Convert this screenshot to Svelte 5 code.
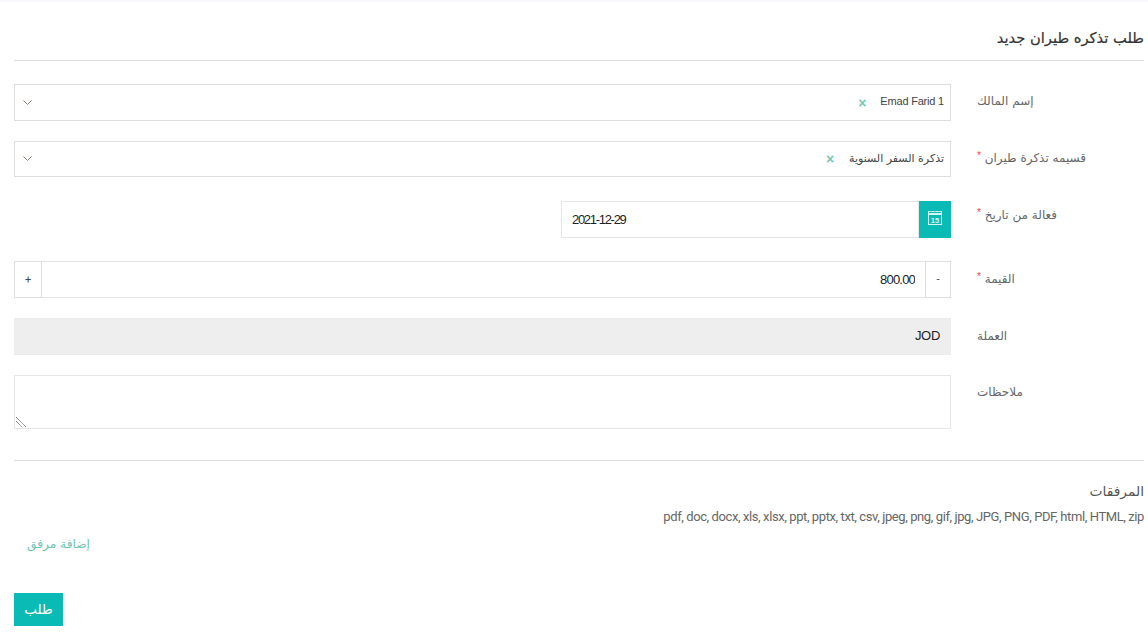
<script>
  const exts = 'pdf, doc, docx, xls, xlsx, ppt, pptx, txt, csv, jpeg, png, gif, jpg, JPG, PNG, PDF, html, HTML, zip';
</script>

<div class="strip"></div>
<main class="page" dir="rtl">
  <h1 class="title">طلب تذكره طيران جديد</h1>

  <div class="row r1">
    <div class="field">
      <div class="select">
        <span class="value" dir="ltr">Emad Farid 1</span>
        <span class="clear">×</span>
        <svg class="chev" width="9" height="6" viewBox="0 0 9 6"><path d="M.5.5l4 4 4-4" fill="none" stroke="#8a7f76" stroke-width="1"/></svg>
      </div>
    </div>
    <label class="label">إسم المالك</label>
  </div>

  <div class="row r2">
    <div class="field">
      <div class="select short">
        <span class="value">تذكرة السفر السنوية</span>
        <span class="clear">×</span>
        <svg class="chev" width="9" height="6" viewBox="0 0 9 6"><path d="M.5.5l4 4 4-4" fill="none" stroke="#8a7f76" stroke-width="1"/></svg>
      </div>
    </div>
    <label class="label">قسيمه تذكرة طيران <i>*</i></label>
  </div>

  <div class="row r3">
    <div class="field">
      <div class="date">
        <button class="cal" aria-label="calendar">
          <svg width="14" height="14" viewBox="0 0 14 14" fill="none" stroke="#d4f3f1">
            <rect x=".5" y=".5" width="13" height="13"/>
            <path d="M.5 3h13" stroke-width="2"/>
            <path d="M3 .5v1M7 .5v1M11 .5v1" stroke="#0abbb5"/>
            <text x="7" y="11.500" fill="#d4f3f1" stroke="none" font-size="7.500" font-weight="700" text-anchor="middle" font-family="Liberation Sans, sans-serif">15</text>
          </svg>
        </button>
        <input class="input date-input" dir="ltr" value="2021-12-29" />
      </div>
    </div>
    <label class="label">فعالة من تاريخ <i>*</i></label>
  </div>

  <div class="row r4">
    <div class="field">
      <div class="stepper">
        <span class="step">-</span>
        <input class="input amount" dir="rtl" value="800.00" />
        <span class="step plus">+</span>
      </div>
    </div>
    <label class="label">القيمة <i>*</i></label>
  </div>

  <div class="row r5">
    <div class="field">
      <input class="input currency" disabled dir="rtl" value="JOD" />
    </div>
    <label class="label">العملة</label>
  </div>

  <div class="row r6">
    <div class="field notes-wrap">
      <textarea class="notes" dir="rtl"></textarea>
      <svg class="grip" width="12" height="12" viewBox="0 0 12 12" aria-hidden="true">
        <path d="M1 1l10 10M1 5l6 6" fill="none" stroke="#555" stroke-width="1" stroke-dasharray="1 .6"/>
      </svg>
    </div>
    <label class="label">ملاحظات</label>
  </div>

  <hr class="rule" />

  <div class="attach">
    <div class="attach-title">المرفقات</div>
    <div class="exts" dir="ltr">{exts}</div>
    <div class="add-line"><a class="add" href="#add">إضافة مرفق</a></div>
  </div>

  <div class="actions"><button class="submit">طلب</button></div>
</main>

<style>
  :global(body) {
    margin: 0;
    background: #fff;
    overflow: hidden;
  }
  .strip {
    height: 2px;
    background: #f7f9fc;
  }
  .page {
    box-sizing: border-box;
    width: 1148px;
    height: 632px;
    padding: 0 4px 0 14px;
    font-family: "DejaVu Sans", "Liberation Sans", sans-serif;
    color: #555;
  }
  .title {
    margin: 0 0 23px;
    padding-top: 26px;
    height: 59px;
    box-sizing: border-box;
    border-bottom: 1px solid #ddd;
    font-size: 14.7px;
    line-height: 20px;
    font-weight: 400;
    color: #333;
    -webkit-text-stroke: 0.2px #333;
  }
  .row {
    display: grid;
    grid-template-columns: 937px 1fr;
    direction: ltr;
  }
  .r1 { margin-bottom: 20px; }
  .r2 { margin-bottom: 24px; }
  .r3 { margin-bottom: 23px; }
  .r4 { margin-bottom: 20px; }
  .r5 { margin-bottom: 20px; }
  .r6 { margin-bottom: 31px; }
  .label {
    padding: 8px 0 0 26px;
    font-size: 12px;
    line-height: 18px;
    color: #666;
    direction: rtl;
    text-align: left;
  }
  .r3 .label { padding-top: 5px; }
  .r4 .label, .r5 .label { padding-top: 9px; }
  .r6 .label { padding-top: 8px; }
  .label i {
    font: 10px/1 "Liberation Sans", sans-serif;
    color: #f04444;
    vertical-align: 3px;
  }
  .select {
    box-sizing: border-box;
    height: 37px;
    display: flex;
    align-items: center;
    direction: rtl;
    padding: 0 6px 0 8px;
    border: 1px solid #ddd;
    color: #444;
  }
  .short { height: 36px; }
  .value {
    font-family: "Liberation Sans", sans-serif;
    font-size: 11px;
    letter-spacing: -0.2px;
    color: #444;
    padding-bottom: 3px;
  }
  .short .value {
    font-family: "DejaVu Sans", sans-serif;
    letter-spacing: 0;
    padding-bottom: 2px;
  }
  .clear {
    margin-right: 14px;
    font: 700 14px/1 "Liberation Sans", sans-serif;
    color: #78c8b6;
  }
  .short .clear { margin-right: 15px; }
  .chev { margin-right: auto; }
  .input {
    box-sizing: border-box;
    height: 37px;
    min-width: 0;
    padding: 0 10px;
    border: 1px solid #e6e6e6;
    background: #fff;
    outline: none;
    font: 13px/1 "Liberation Sans", sans-serif;
    color: #222;
  }
  .date {
    display: flex;
    direction: rtl;
    margin-left: 547px;
  }
  .cal {
    flex: 0 0 32px;
    height: 37px;
    padding: 0 0 3px;
    border: 0;
    display: flex;
    align-items: center;
    justify-content: center;
    background: #0abbb5;
  }
  .date-input {
    flex: 1;
    text-align: left;
    letter-spacing: -1.3px;
  }
  .stepper {
    display: flex;
    direction: rtl;
  }
  .step {
    box-sizing: border-box;
    flex: 0 0 26px;
    height: 37px;
    display: flex;
    align-items: center;
    justify-content: center;
    border: 1px solid #ddd;
    font: 11px/1 Roboto, sans-serif;
    color: #445;
  }
  .plus { flex-basis: 28px; }
  .amount {
    flex: 1;
    text-align: right;
    border-right: 0;
    border-left: 0;
    letter-spacing: -0.8px;
    padding-bottom: 1px;
  }
  .currency {
    width: 100%;
    background: #eee;
    border-color: #ececec;
    color: #222;
    letter-spacing: -0.3px;
    padding-bottom: 2px;
  }
  .notes-wrap { position: relative; }
  .notes {
    display: block;
    box-sizing: border-box;
    width: 100%;
    height: 54px;
    margin: 0;
    padding: 6px 10px;
    border: 1px solid #e6e6e6;
    outline: none;
    resize: none;
  }
  .grip {
    position: absolute;
    left: 1px;
    bottom: 1px;
  }
  .rule {
    margin: 0;
    border: 0;
    border-top: 1px solid #ddd;
  }
  .attach {
    font: 13px/18px Roboto, sans-serif;
    color: #666;
  }
  .attach-title {
    padding-top: 21px;
    font: 13.8px/18px "DejaVu Sans", sans-serif;
    color: #555;
  }
  .exts {
    margin-top: 8px;
    text-align: right;
    letter-spacing: -0.4px;
  }
  .add-line {
    direction: ltr;
    margin-top: 9px;
    padding-left: 13px;
  }
  .add {
    font: 12.2px/18px "DejaVu Sans", sans-serif;
    color: #6cc3b4;
    text-decoration: none;
  }
  .actions {
    direction: ltr;
    margin-top: 40px;
  }
  .submit {
    width: 49px;
    height: 33px;
    padding: 0;
    border: 0;
    background: #0abbb5;
    color: #fff;
    font: 13.5px/1 "DejaVu Sans", sans-serif;
  }
</style>
